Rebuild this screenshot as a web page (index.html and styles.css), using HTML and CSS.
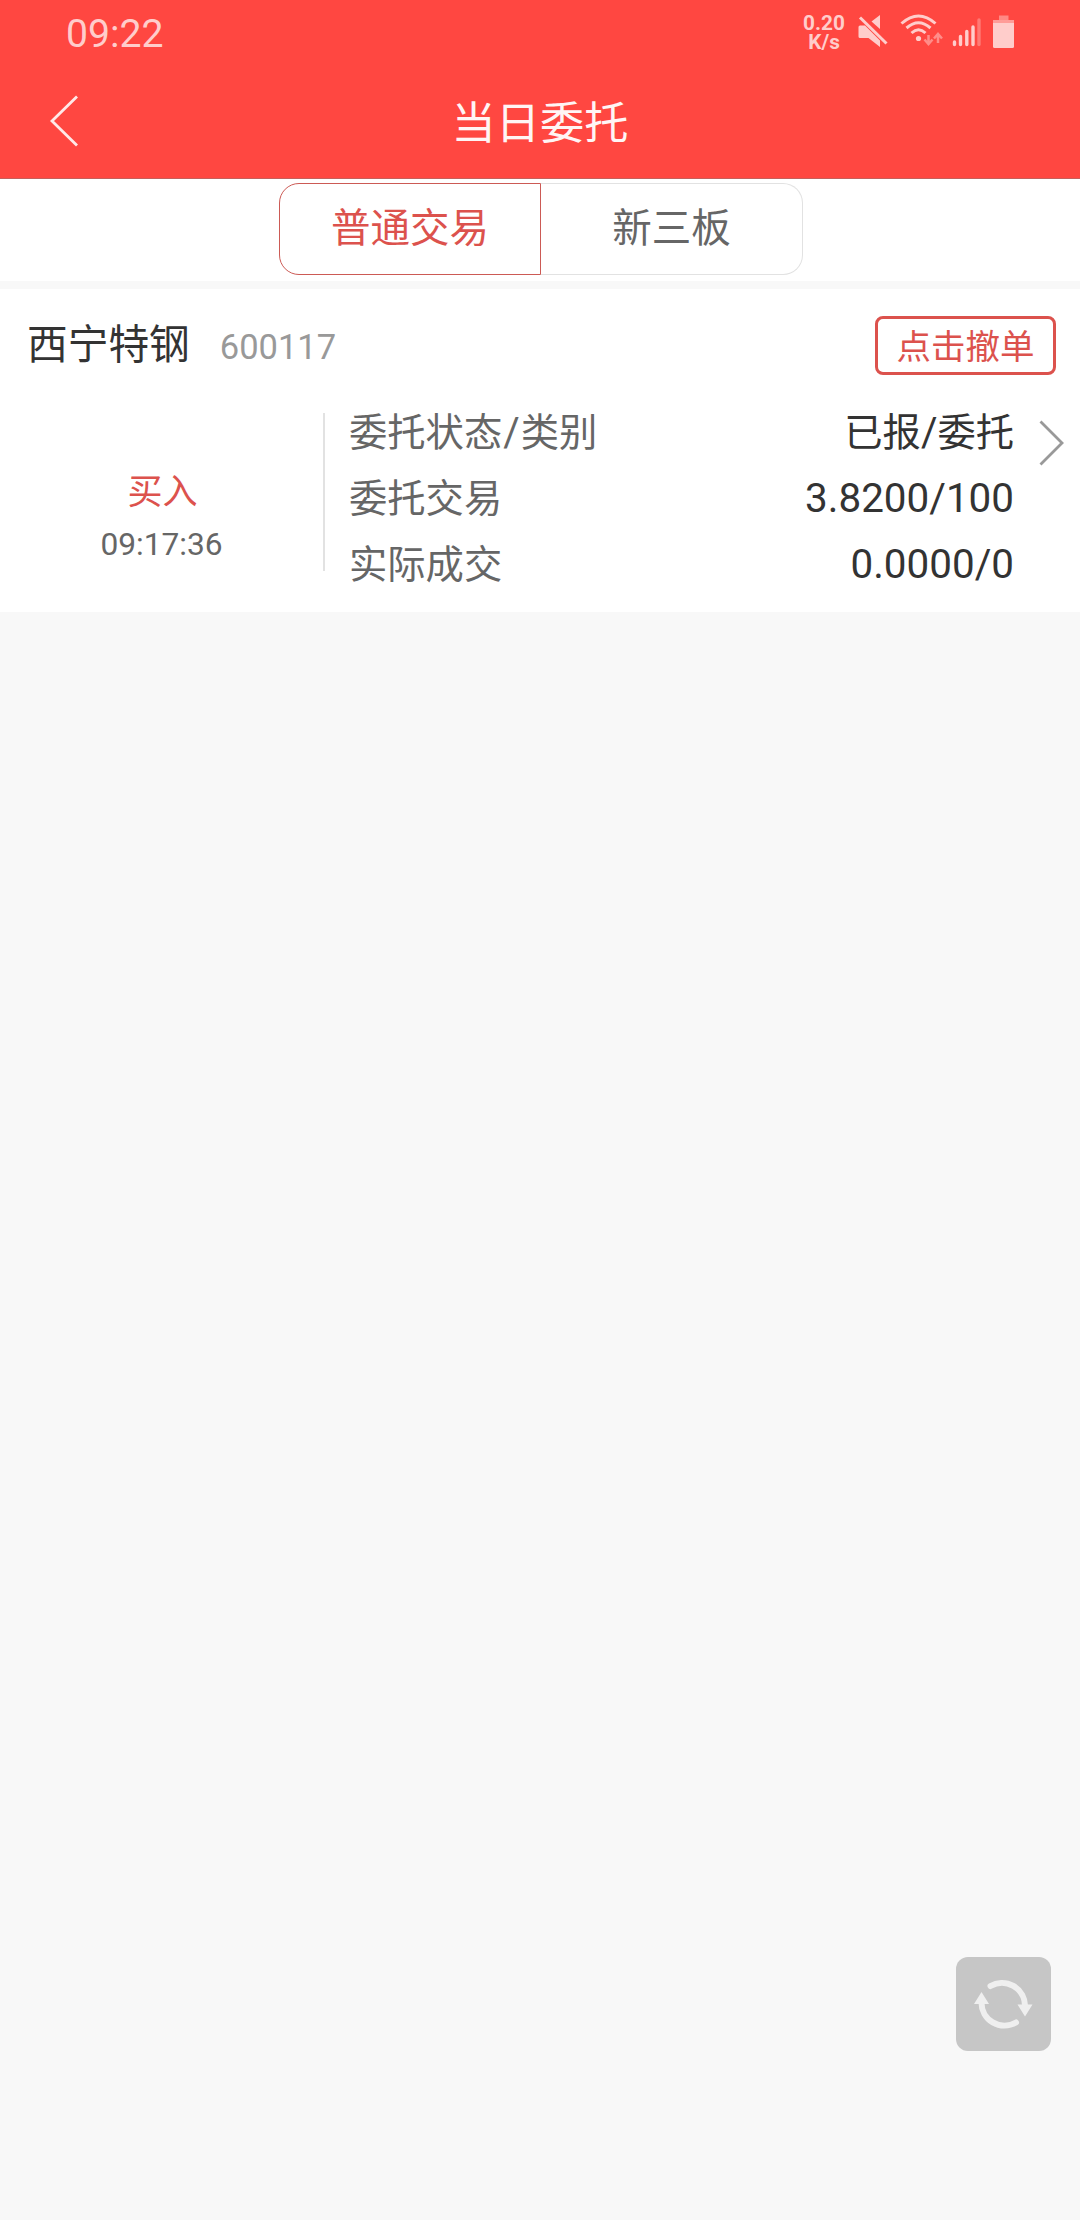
FILE: index.html
```html
<!DOCTYPE html>
<html lang="zh-CN">
<head>
<meta charset="utf-8">
<title>当日委托</title>
<link rel="stylesheet" href="styles.css">
</head>
<body>
<header class="header">
  <div class="status">
    <span class="clock">09:22</span>
    <div class="speed"><div>0.20</div><div>K/s</div></div>
    <svg class="sysicons" viewBox="850 0 170 68" width="170" height="68">
      <path d="M871.500 21.500l8.500-6.500v14zM860 25.500h5l15 15v6.500l-11.500-9h-8.500q-1.500 0-1.500-1.500v-9.500q0-1.500 1.500-1.500z" fill="#ffcdcb"/>
      <path d="M860 17.500l26.500 26" stroke="#ffcdcb" stroke-width="3"/>
      <g fill="none" stroke="#ffcdcb" stroke-width="3">
        <path d="M901.500 23.500Q918.500 8.500 935.500 23.500"/>
        <path d="M906.500 28Q918.500 17.500 930.500 28"/>
        <path d="M911.500 33Q918.500 26.500 925.500 33"/>
      </g>
      <circle cx="918.500" cy="38.500" r="2.600" fill="#ffcdcb"/>
      <path d="M928.500 35v9m-4-4.500l4 4.500l4-4.500M938 43v-9m-4 4.500l4-4.500l4 4.500" fill="none" stroke="#ff8d89" stroke-width="2.500"/>
      <g stroke="#ffcdcb" stroke-width="3.400" stroke-linecap="round">
        <path d="M954.500 42v2.500M960.500 36.500v8M966.800 31.500v13M973 27v17.500"/>
        <path d="M979 20v24.500" stroke="#ff7a75"/>
      </g>
      <path d="M999 15.500h9.500v5h-9.500z" fill="#ff8984"/>
      <rect x="993" y="20" width="21" height="28" rx="1.500" fill="#ffcdcb"/>
      <path d="M993 20h21v3h-21z" fill="#ff9c98"/>
    </svg>
  </div>
  <div class="nav">
    <svg class="back" viewBox="0 0 30 52" width="30" height="52"><path d="M28 1.500L3 26L28 50.500" fill="none" stroke="#ffe9e8" stroke-width="2.800"/></svg>
    <h1 class="title">当日委托</h1>
  </div>
</header>
<div class="tabs">
  <div class="tab active">普通交易</div>
  <div class="tab">新三板</div>
</div>
<section class="card">
  <div class="card-head">
    <span class="name">西宁特钢</span>
    <span class="code">600117</span>
    <button class="cancel">点击撤单</button>
  </div>
  <div class="card-body">
    <div class="side">
      <div class="action">买入</div>
      <div class="time">09:17:36</div>
    </div>
    <div class="rows">
      <div class="row"><span class="label">委托状态<span class="slash">/</span>类别</span><span class="value">已报<span class="slash">/</span>委托</span></div>
      <div class="row"><span class="label">委托交易</span><span class="value num">3.8200/100</span></div>
      <div class="row"><span class="label">实际成交</span><span class="value num">0.0000/0</span></div>
    </div>
    <svg class="more" viewBox="0 0 26 46" width="26" height="46"><path d="M1.500 1.500L23 23L1.500 44.500" fill="none" stroke="#999" stroke-width="2.800"/></svg>
  </div>
</section>
<div class="refresh">
  <svg viewBox="0 0 95 94" width="95" height="94">
    <g fill="none" stroke="#efefef" stroke-width="6" stroke-linecap="round">
      <path d="M34.500 29A23 23 0 0 1 69 48.500"/>
      <path d="M60 65.500A23 23 0 0 1 25.500 45"/>
    </g>
    <path d="M61.500 47.500h15l-7.500 12zM18 47h15l-7.500-12z" fill="#efefef"/>
  </svg>
</div>
</body>
</html>
```
FILE: styles.css
```css
* { box-sizing: border-box; }
body {
  margin: 0;
  width: 1080px;
  height: 2220px;
  overflow: hidden;
  background: #f8f8f8;
  font-family: Roboto, "Noto Sans CJK SC", sans-serif;
  font-weight: 400;
}
.header { height: 179px; background: #ff4741; border-bottom: 1px solid #c4605c; }
.status { display: flex; height: 67px; padding-left: 66px; color: #ffcdcb; }
.clock { width: 737px; font-size: 39.200px; line-height: 68px; }
.speed {
  width: 42px;
  margin-right: 5px;
  padding-top: 14px;
  font-size: 20.800px;
  font-weight: 700;
  line-height: 19px;
  text-align: center;
}
.sysicons { flex: none; }
.nav { display: grid; grid-template-columns: 80px 1fr 80px; align-items: center; height: 111px; }
.back { margin: -5px 0 0 49px; }
.title { margin: 0; padding-top: 2px; font-size: 44.200px; font-weight: 400; line-height: 111px; text-align: center; color: #fff5f5; }
.tabs { display: flex; justify-content: center; height: 102px; padding: 4px 0 0 2px; background: #fff; }
.tab {
  width: 262px;
  height: 92px;
  border: 1px solid #e2e2e2;
  border-left: 0;
  border-radius: 0 20px 20px 0;
  font-size: 39.500px;
  line-height: 89px;
  text-align: center;
  color: #666;
}
.tab.active { border: 1px solid #cc5a55; border-radius: 20px 0 0 20px; color: #dc524d; }
.card { height: 323px; margin-top: 8px; background: #fff; }
.card-head { display: flex; height: 124px; padding: 27px 24px 0 27px; }
.name { font-size: 40.700px; line-height: 58px; color: #333; }
.code { margin-left: 30px; font-size: 34.500px; line-height: 62px; color: #999; }
.cancel {
  width: 181px;
  height: 59px;
  margin-left: auto;
  padding: 4px 0 0;
  border: 3px solid #dc524d;
  border-radius: 8px;
  background: #fff;
  font: 34.500px/49px Roboto, "Noto Sans CJK SC", sans-serif;
  color: #dc524d;
}
.card-body { display: flex; height: 158px; }
.side { width: 325px; border-right: 2px solid #e2e2e2; text-align: center; }
.action { padding: 54px 0 0 2px; font-size: 35px; line-height: 52px; color: #dc524d; }
.time { font-size: 31.700px; line-height: 52px; color: #666; }
.rows { width: 689px; padding-left: 24px; margin-top: -13px; }
.row { display: flex; justify-content: space-between; height: 66px; font-size: 38.300px; line-height: 66px; }
.label { color: #666; }
.value { color: #333; }
.label .slash { margin: 0 1px; font-size: 40px; }
.value .slash { font-size: 40px; }
.num { font-size: 40.400px; }
.more { margin: 7px 0 0 25px; }
.refresh {
  position: absolute;
  left: 956px;
  top: 1957px;
  width: 95px;
  height: 94px;
  border-radius: 12px;
  background: #c6c6c6;
}
.refresh svg { display: block; }
```
